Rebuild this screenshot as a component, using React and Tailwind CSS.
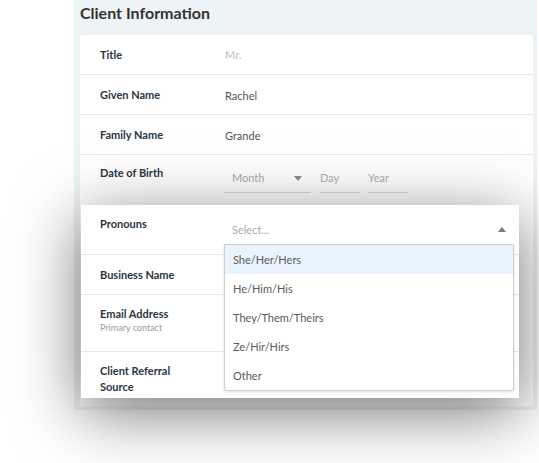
import React from 'react'

const FONT = { fontFamily: 'Lato, "Open Sans", "Liberation Sans", sans-serif' }

const OPTIONS = ['She/Her/Hers', 'He/Him/His', 'They/Them/Theirs', 'Ze/Hir/Hirs', 'Other']

function Label({ children, sub }) {
  return (
    <div className="w-[124px] shrink-0">
      <div className="w-[100px] text-[11px] leading-[16px] font-bold text-[#2b3643]">{children}</div>
      {sub && <div className="mt-[-1px] text-[9px] leading-[14px] text-[#a3979d]">{sub}</div>}
    </div>
  )
}

function Caret({ up }) {
  return (
    <svg width="8" height="5" viewBox="0 0 8 5" className="shrink-0">
      {up ? <path d="M0 5 L4 0 L8 5 Z" fill="#7a7a7a" /> : <path d="M0 0 L8 0 L4 5 Z" fill="#8a8a8a" />}
    </svg>
  )
}

export default function App() {
  return (
    <div className="w-[539px] h-[463px] bg-white overflow-hidden" style={FONT}>
      <div className="ml-[74px] w-[463px] bg-[#eef3f6] pl-[6px] pr-[4px] pb-[4px]">
        <h2 className="h-[35px] pt-[2px] text-[16px] leading-[22px] font-bold text-[#333]">Client Information</h2>

        <div className="bg-white rounded-t-[3px] pb-[8px]">
          {/* top rows */}
          <div className="h-[40px] border-b border-[#e6e6e6] flex items-start pl-[20px] pt-[12px]">
            <Label>Title</Label>
            <span className="pl-[1px] text-[11px] leading-[16px] text-[#bdbdbd]">Mr.</span>
          </div>
          <div className="h-[40px] border-b border-[#e6e6e6] flex items-start pl-[20px] pt-[12px]">
            <Label>Given Name</Label>
            <span className="pl-[1px] pt-[1px] text-[11px] leading-[16px] text-[#555]">Rachel</span>
          </div>
          <div className="h-[40px] border-b border-[#e6e6e6] flex items-start pl-[20px] pt-[12px]">
            <Label>Family Name</Label>
            <span className="pl-[1px] pt-[1px] text-[11px] leading-[16px] text-[#555]">Grande</span>
          </div>
          <div className="h-[50px] flex items-start pl-[20px] pt-[10px]">
            <Label>Date of Birth</Label>
            <div className="flex">
              <div className="w-[87px] h-[28px] border-b border-[#dcdcdc] flex items-center justify-between pl-[8px] pr-[9px] text-[11px] text-[#a9a9a9]">
                <span>Month</span>
                <Caret />
              </div>
              <div className="ml-[9px] w-[40px] h-[28px] border-b border-[#dcdcdc] flex items-center text-[11px] text-[#b0b0b0]">Day</div>
              <div className="ml-[8px] w-[40px] h-[28px] border-b border-[#dcdcdc] flex items-center text-[11px] text-[#b0b0b0]">Year</div>
            </div>
          </div>

          {/* raised section */}
          <div className="relative z-10 ml-[1px] mr-[14px] h-[193px] bg-white overflow-hidden shadow-[0_14px_60px_rgba(0,0,0,0.55)]">
            <div className="relative z-20 h-[50px] border-b border-[#e6e6e6] flex items-start pl-[19px] pt-[11px]">
              <Label>Pronouns</Label>
              <div className="relative w-[290px] mt-[-1px]">
                <div className="h-[29px] flex items-center justify-between pl-[8px] pr-[8px] text-[11px] text-[#a9a9a9]">
                  <span className="pt-[2px]">Select...</span>
                  <Caret up />
                </div>
                <div className="absolute left-0 right-0 top-full bg-white border border-[#cfcfcf] rounded-b-[3px] shadow-[0_1px_3px_rgba(0,0,0,0.12)]">
                  {OPTIONS.map((o, i) => (
                    <div
                      key={o}
                      className={`h-[29px] flex items-center pl-[8px] pt-[2px] text-[11px] text-[#5a5a5a] ${i === 0 ? 'bg-[#eaf4fe]' : ''}`}
                    >
                      {o}
                    </div>
                  ))}
                </div>
              </div>
            </div>
            <div className="h-[40px] border-b border-[#e6e6e6] flex items-start pl-[19px] pt-[12px]">
              <Label>Business Name</Label>
            </div>
            <div className="h-[57px] border-b border-[#e6e6e6] flex items-start pl-[19px] pt-[11px]">
              <Label sub="Primary contact">Email Address</Label>
              <div className="mt-[-3px] w-[290px] h-[37px] border border-[#dedede] rounded-[3px]" />
            </div>
            <div className="flex items-start pl-[19px] pt-[11px]">
              <Label>Client Referral Source</Label>
            </div>
          </div>
        </div>
      </div>
    </div>
  )
}
